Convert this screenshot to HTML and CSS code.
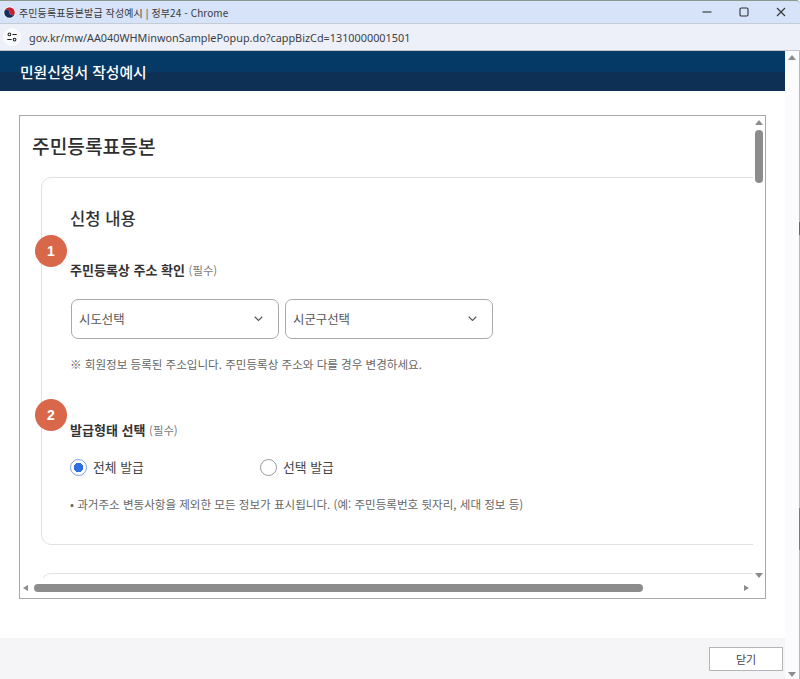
FILE: index.html
```html
<!DOCTYPE html>
<html lang="ko">
<head>
<meta charset="utf-8">
<title>주민등록표등본발급 작성예시</title>
<link rel="stylesheet" href="styles.css">
</head>
<body>
<div class="window">
  <header class="titlebar">
    <svg class="favicon" viewBox="0 0 16 16" width="13" height="13">
      <circle cx="8" cy="8" r="7.5" fill="#fff"/>
      <path d="M1.5 8a6.5 6.5 0 0 1 13 0a3.2 3.2 0 0 1-6.5 0a3.2 3.2 0 0 0-6.5 0z" fill="#c8202f"/>
      <path d="M1.5 8a3.2 3.2 0 0 1 6.5 0a3.2 3.2 0 0 0 6.5 0a6.5 6.5 0 0 1-13 0z" fill="#12305f"/>
    </svg>
    <span class="title-text">주민등록표등본발급 작성예시 | 정부24 - Chrome</span>
    <div class="win-controls">
      <svg viewBox="0 0 12 12" width="12" height="12"><path d="M1.5 6h9" stroke="#333" stroke-width="1.1"/></svg>
      <svg viewBox="0 0 12 12" width="12" height="12"><rect x="2" y="2" width="8" height="8" rx="1.2" fill="none" stroke="#333" stroke-width="1.1"/></svg>
      <svg viewBox="0 0 12 12" width="12" height="12"><path d="M2 2l8 8M10 2l-8 8" stroke="#333" stroke-width="1.1"/></svg>
    </div>
  </header>
  <div class="addressbar">
    <span class="site-icon">
      <svg viewBox="0 0 14 14" width="12" height="12">
        <circle cx="4" cy="4" r="1.6" fill="none" stroke="#222" stroke-width="1.2"/>
        <path d="M7.5 4h5M1.5 10h5" stroke="#222" stroke-width="1.2"/>
        <circle cx="10" cy="10" r="1.6" fill="none" stroke="#222" stroke-width="1.2"/>
      </svg>
    </span>
    <span class="url">gov.kr/mw/AA040WHMinwonSamplePopup.do?cappBizCd=1310000001501</span>
  </div>
  <div class="viewport">
    <div class="page">
      <div class="page-head">민원신청서 작성예시</div>
      <main class="page-body">
        <div class="frame">
          <div class="frame-content">
            <h1 class="doc-title">주민등록표등본</h1>
            <section class="card">
              <h2 class="card-title">신청 내용</h2>
              <div class="badge badge-one">1</div>
              <h3 class="field-label">주민등록상 주소 확인 <small>(필수)</small></h3>
              <div class="selects">
                <div class="select"><span>시도선택</span><svg viewBox="0 0 12 8" width="9" height="6"><path d="M1 1l5 5 5-5" fill="none" stroke="#555" stroke-width="1.5"/></svg></div>
                <div class="select"><span>시군구선택</span><svg viewBox="0 0 12 8" width="9" height="6"><path d="M1 1l5 5 5-5" fill="none" stroke="#555" stroke-width="1.5"/></svg></div>
              </div>
              <p class="note">※ 회원정보 등록된 주소입니다. 주민등록상 주소와 다를 경우 변경하세요.</p>
              <div class="badge badge-two">2</div>
              <h3 class="field-label label-two">발급형태 선택 <small>(필수)</small></h3>
              <div class="radios">
                <div class="radio-item"><span class="radio radio-on"></span>전체 발급</div>
                <div class="radio-item"><span class="radio"></span>선택 발급</div>
              </div>
              <p class="note note-small">• 과거주소 변동사항을 제외한 모든 정보가 표시됩니다. (예: 주민등록번호 뒷자리, 세대 정보 등)</p>
            </section>
            <div class="card card-next"></div>
          </div>
          <div class="sb-v">
            <span class="arrow arrow-up"></span>
            <span class="thumb-v"></span>
            <span class="arrow arrow-down"></span>
          </div>
          <div class="sb-h">
            <span class="arrow arrow-left"></span>
            <span class="thumb-h"></span>
            <span class="arrow arrow-right"></span>
          </div>
        </div>
      </main>
      <footer class="page-foot"><button class="close-btn" type="button">닫기</button></footer>
    </div>
    <div class="outer-sb">
      <span class="arrow arrow-up"></span>
      <span class="arrow arrow-down"></span>
    </div>
    <div class="edge">
      <span class="edge-mark"></span>
      <span class="edge-blue"></span>
    </div>
  </div>
</div>
</body>
</html>
```
FILE: styles.css
```css
* { box-sizing: border-box; }
html, body { margin: 0; padding: 0; }
body {
  width: 800px;
  height: 679px;
  overflow: hidden;
  background: #fff;
  font-family: "Noto Sans CJK KR", "Noto Sans", sans-serif;
  color: #333;
}
.window { display: flex; flex-direction: column; height: 679px; }
.titlebar {
  height: 24px;
  flex: none;
  display: flex;
  align-items: center;
  padding-left: 3px;
  background: #d6e3f8;
  border-top: 1px solid #8c9a8c;
  border-bottom: 1px solid #c4ccd6;
  border-top-right-radius: 4px;
}
.title-text { margin-left: 3px; font-size: 10px; color: #3a3a3a; letter-spacing: 0.1px; }
.win-controls { margin-left: auto; display: flex; gap: 25px; padding-right: 13px; }
.addressbar {
  height: 27px;
  flex: none;
  display: flex;
  align-items: center;
  padding-left: 3px;
  background: #edf0f9;
  border-bottom: 1px solid #c2c6ce;
}
.site-icon { display: flex; width: 18px; height: 18px; align-items: center; justify-content: center; border-radius: 50%; background: #fbfcff; }
.url { margin-left: 8px; font-family: "Noto Sans", "Liberation Sans", sans-serif; font-size: 10.85px; color: #3c4043; }
.viewport { flex: 1; display: flex; min-height: 0; }
.page { width: 785px; flex: none; display: flex; flex-direction: column; }
.page-head {
  height: 40px;
  flex: none;
  padding-left: 20px;
  display: flex;
  align-items: center;
  font-size: 14.8px;
  font-weight: 500;
  color: #fff;
  background: linear-gradient(#063a66 0 50%, #0e3055 55% 100%);
}
.page-body { flex: 1; padding: 24px 0 0 19px; min-height: 0; }
.frame {
  position: relative;
  width: 747px;
  height: 484px;
  border: 1px solid #a8a8a8;
  overflow: hidden;
}
.frame-content { padding: 15px 0 0 12px; }
.doc-title { margin: 0; font-size: 19.2px; line-height: 30px; font-weight: 500; color: #2e2e2e; }
.card {
  position: relative;
  width: 780px;
  height: 368px;
  margin: 16px 0 0 9px;
  padding: 28px 0 0 28px;
  border: 1px solid #e2e2e2;
  border-radius: 10px;
}
.card-next { height: 40px; margin-top: 28px; padding: 0; }
.card-title { margin: 0; font-size: 16.6px; line-height: 24px; font-weight: 500; color: #333; }
.badge {
  position: absolute;
  left: -7px;
  width: 32px;
  height: 32px;
  border-radius: 50%;
  background: #d9674a;
  color: #fff;
  font: 700 14px/32px "Liberation Sans", sans-serif;
  text-align: center;
}
.badge-one { top: 57px; }
.badge-two { top: 221px; }
.field-label { margin: 31px 0 0; font-size: 13px; line-height: 18px; font-weight: 700; color: #333; }
.field-label small { font-size: 11.4px; font-weight: 400; color: #777; }
.selects { display: flex; gap: 6px; margin: 20px 0 0 1px; }
.select {
  width: 208px;
  height: 40px;
  display: flex;
  align-items: center;
  justify-content: space-between;
  padding: 0 15px 0 7px;
  border: 1px solid #a9a9a9;
  border-radius: 7px;
  font-size: 12.4px;
  color: #555;
}
.note { margin: 16px 0 0; font-size: 11.55px; line-height: 18px; color: #666; }
.field-label.label-two { margin-top: 48px; }
.radios { display: flex; margin-top: 19px; }
.radio-item { width: 190px; display: flex; align-items: center; gap: 6px; font-size: 12.8px; line-height: 18px; color: #444; }
.radio { width: 17px; height: 17px; border-radius: 50%; border: 1px solid #999; background: #fff; }
.radio-on { border-color: #7c9fe0; background: radial-gradient(circle, #2f6fe0 0 4.5px, #fff 5px); }
.note.note-small { margin-top: 19px; }
.sb-v {
  position: absolute;
  top: 0; right: 0; bottom: 20px;
  width: 12px;
  background: #fff;
  display: flex;
  flex-direction: column;
  align-items: center;
  padding-top: 4px;
}
.sb-h {
  position: absolute;
  left: 0; right: 0; bottom: 0;
  height: 20px;
  background: #fff;
  display: flex;
  align-items: center;
  padding-left: 3px;
}
.arrow { display: block; width: 0; height: 0; border-style: solid; border-color: transparent; }
.arrow-up { border-width: 0 4px 5px; border-bottom-color: #8c8c8c; }
.arrow-down { border-width: 5px 4px 0; border-top-color: #8c8c8c; }
.arrow-left { border-width: 3.5px 5px 3.5px 0; border-right-color: #8c8c8c; }
.arrow-right { border-width: 3.5px 0 3.5px 5px; border-left-color: #8c8c8c; margin-left: 101px; }
.thumb-v { width: 8px; height: 53px; margin-top: 5px; border-radius: 4px; background: #8c8c8c; }
.sb-v .arrow-down { margin-top: auto; }
.thumb-h { width: 609px; height: 8px; margin-left: 6px; border-radius: 4px; background: #8c8c8c; }
.page-foot {
  height: 41px;
  flex: none;
  background: #f5f4f6;
  display: flex;
  justify-content: flex-end;
  align-items: center;
  padding-right: 2px;
}
.close-btn {
  width: 74px;
  height: 24px;
  padding: 0;
  background: #fff;
  border: 1px solid #b5b5b5;
  font: 400 11px "Noto Sans CJK KR", sans-serif;
  color: #444;
}
.outer-sb {
  flex: 1;
  background: #fbfbfd;
  display: flex;
  flex-direction: column;
  justify-content: space-between;
  align-items: center;
  padding: 4px 0 2px;
}
.edge {
  width: 1px;
  flex: none;
  background: #b8b8b8;
  display: flex;
  flex-direction: column;
}
.edge-mark { height: 13px; margin-top: 171px; background: #666; }
.edge-blue { height: 42px; margin-top: 273px; background: #5b7fb8; }
```
